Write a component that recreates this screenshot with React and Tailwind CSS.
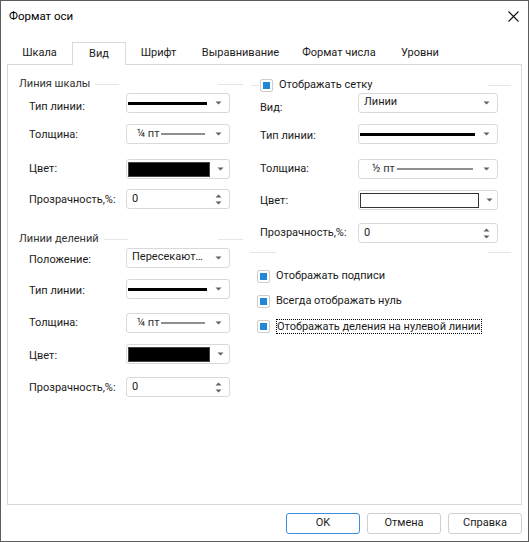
import React from "react";

const Arrow = () => (
  <div className="w-[21px] h-full flex items-center justify-center shrink-0">
    <svg width="7" height="4" viewBox="0 0 7 4">
      <path d="M0.5 0.5 L6.5 0.5 L3.5 3.5 Z" fill="#606060" />
    </svg>
  </div>
);

const Spin = () => (
  <div className="w-[21px] h-full flex flex-col items-center justify-center gap-[3px] shrink-0">
    <svg width="7" height="4" viewBox="0 0 7 4">
      <path d="M0.5 3.5 L6.5 3.5 L3.5 0.5 Z" fill="#606060" />
    </svg>
    <svg width="7" height="4" viewBox="0 0 7 4">
      <path d="M0.5 0.5 L6.5 0.5 L3.5 3.5 Z" fill="#606060" />
    </svg>
  </div>
);

const Box = ({ w, children }) => (
  <div
    className={`${w} h-[20px] border border-[#d9d9d9] rounded-[3px] bg-white flex items-center shrink-0`}
  >
    {children}
  </div>
);

const LineBox = ({ w }) => (
  <Box w={w}>
    <div className="flex-1 px-[1px]">
      <div className="h-[3px] bg-black" />
    </div>
    <Arrow />
  </Box>
);

const WidthBox = ({ w, text, pad }) => (
  <Box w={w}>
    <div className={`flex-1 flex items-center ${pad} pr-[3px]`}>
      <span className="text-[#333] leading-[16px]">{text}</span>
      <div className="flex-1 ml-[2px] h-[2px] bg-[#8f8f8f]" />
    </div>
    <Arrow />
  </Box>
);

const ColorBox = ({ w, swatch }) => (
  <Box w={w}>
    <div className="flex-1 pl-[1px]">
      <div className={swatch} />
    </div>
    <Arrow />
  </Box>
);

const TextBox = ({ w, text }) => (
  <Box w={w}>
    <div className="flex-1 pl-[5px] whitespace-nowrap overflow-hidden leading-[16px] pb-[2px]">{text}</div>
    <Arrow />
  </Box>
);

const SpinBox = ({ w }) => (
  <Box w={w}>
    <div className="flex-1 pl-[5px] leading-[16px]">0</div>
    <Spin />
  </Box>
);

const Row = ({ mt, label, lw, lcls = "", children }) => (
  <div className={`flex items-center h-[20px] ${mt}`}>
    <span className={`${lw} shrink-0 leading-[16px] ${lcls}`}>{label}</span>
    {children}
  </div>
);

const Check = () => (
  <div className="w-[13px] h-[13px] border border-[#cdcdcd] rounded-[2px] bg-white flex items-center justify-center shrink-0">
    <div className="w-[7px] h-[7px] bg-[#2188d8]" />
  </div>
);

const GroupTitle = ({ mt, text }) => (
  <div className={`flex items-center h-[16px] pl-[11px] pr-[7px] ${mt}`}>
    <span className="text-[#333]">{text}</span>
    <span className="ml-[5px] w-[24px] h-px bg-[#e6e6e6]" />
    <span className="ml-auto w-[25px] h-px bg-[#e6e6e6]" />
  </div>
);

const tabs = [
  { name: "Шкала", w: "w-[65px]" },
  { name: "Вид", w: "w-[54px]", active: true },
  { name: "Шрифт", w: "w-[65px]" },
  { name: "Выравнивание", w: "w-[99px]" },
  { name: "Формат числа", w: "w-[98px]" },
  { name: "Уровни", w: "w-[64px]" },
];

export default function App() {
  const L = "w-[97px]";
  const R = "w-[98px]";
  return (
    <div
      className="w-[529px] h-[542px] border border-[#5c5c5c] bg-white flex flex-col text-[11px] text-[#1b1b1b]"
      style={{ fontFamily: 'Roboto, "Noto Sans", sans-serif' }}
    >
      {/* title bar */}
      <div className="h-[41px] flex items-start justify-between">
        <span className="ml-[8px] mt-[7px] text-[11.5px] text-black">Формат оси</span>
        <svg className="mt-[10px] mr-[9px]" width="11" height="11" viewBox="0 0 11 11">
          <path d="M0.5 0.5 L10.5 10.5 M10.5 0.5 L0.5 10.5" stroke="#111" strokeWidth="1.1" />
        </svg>
      </div>

      {/* tabs */}
      <div className="h-[22px] flex ml-[6px] relative z-10">
        {tabs.map((t) => (
          <div
            key={t.name}
            className={`${t.w} flex items-center justify-center ${
              t.active
                ? "bg-white border border-b-0 border-[#d9d9d9] h-[23px]"
                : "h-[22px]"
            }`}
          >
            {t.name}
          </div>
        ))}
      </div>

      {/* panel */}
      <div className="mx-[6px] h-[441px] border border-[#d9d9d9] flex">
        {/* left column */}
        <div className="w-[242px] flex flex-col">
          <GroupTitle mt="mt-[11px]" text="Линия шкалы" />
          <div className="pl-[21px] flex flex-col">
            <Row mt="mt-[1px]" label="Тип линии:" lw={L} lcls="pt-[8px]">
              <LineBox w="w-[104px]" />
            </Row>
            <Row mt="mt-[11px]" label="Толщина:" lw={L} lcls="pt-[2px]">
              <WidthBox w="w-[104px]" text="¼ пт" pad="pl-[10px]" />
            </Row>
            <Row mt="mt-[15px]" label="Цвет:" lw={L}>
              <ColorBox w="w-[104px]" swatch="w-[82px] h-[15px] bg-black border border-[#444]" />
            </Row>
            <Row mt="mt-[10px]" label="Прозрачность,%:" lw={L} lcls="pt-[2px]">
              <SpinBox w="w-[104px]" />
            </Row>
          </div>

          <GroupTitle mt="mt-[22px]" text="Линии делений" />
          <div className="pl-[21px] flex flex-col">
            <Row mt="mt-[1px]" label="Положение:" lw={L} lcls="pt-[3px]">
              <TextBox w="w-[104px]" text="Пересекают…" />
            </Row>
            <Row mt="mt-[11px]" label="Тип линии:" lw={L} lcls="pt-[4px]">
              <LineBox w="w-[104px]" />
            </Row>
            <Row mt="mt-[14px]" label="Толщина:" lw={L}>
              <WidthBox w="w-[104px]" text="¼ пт" pad="pl-[10px]" />
            </Row>
            <Row mt="mt-[11px]" label="Цвет:" lw={L} lcls="pt-[4px]">
              <ColorBox w="w-[104px]" swatch="w-[82px] h-[15px] bg-black border border-[#444]" />
            </Row>
            <Row mt="mt-[13px]" label="Прозрачность,%:" lw={L} lcls="pt-[2px]">
              <SpinBox w="w-[104px]" />
            </Row>
          </div>
        </div>

        {/* right column */}
        <div className="flex-1 flex flex-col">
          <div className="mt-[12px] h-[16px] flex items-center pl-[1px] pr-[10px]">
            <span className="w-[8px] h-px bg-[#e6e6e6]" />
            <span className="ml-[1px]">
              <Check />
            </span>
            <span className="ml-[6px]">Отображать сетку</span>
            <span className="ml-auto w-[23px] h-px bg-[#e6e6e6]" />
          </div>
          <div className="pl-[10px] flex flex-col">
            <Row mt="mt-0" label="Вид:" lw={R} lcls="pt-[9px]">
              <TextBox w="w-[140px]" text="Линии" />
            </Row>
            <Row mt="mt-[11px]" label="Тип линии:" lw={R} lcls="pt-[3px]">
              <LineBox w="w-[140px]" />
            </Row>
            <Row mt="mt-[15px]" label="Толщина:" lw={R}>
              <WidthBox w="w-[140px]" text="½ пт" pad="pl-[13px]" />
            </Row>
            <Row mt="mt-[11px]" label="Цвет:" lw={R} lcls="pt-[2px]">
              <ColorBox w="w-[140px]" swatch="w-[119px] h-[15px] bg-white border border-[#333]" />
            </Row>
            <Row mt="mt-[13px]" label="Прозрачность,%:" lw={R}>
              <SpinBox w="w-[140px]" />
            </Row>
          </div>
          <div className="mt-[9px] h-px flex pr-[10px]">
            <span className="w-[26px] h-px bg-[#e6e6e6]" />
            <span className="ml-auto w-[23px] h-px bg-[#e6e6e6]" />
          </div>
          <div className="pl-[7px] flex flex-col">
            <div className="mt-[15px] h-[16px] flex items-center">
              <Check />
              <span className="ml-[6px]">Отображать подписи</span>
            </div>
            <div className="mt-[9px] h-[16px] flex items-center">
              <Check />
              <span className="ml-[6px]">Всегда отображать нуль</span>
            </div>
            <div className="mt-[9px] h-[16px] flex items-center">
              <Check />
              <span className="ml-[6px] border border-dotted border-black leading-[13px] pr-[1px]">
                Отображать деления на нулевой линии
              </span>
            </div>
          </div>
        </div>
      </div>

      {/* footer */}
      <div className="flex justify-end gap-[7px] mt-[8px] mr-[6px]">
        <button className="w-[74px] h-[21px] border border-[#3d8ee0] rounded-[3px] bg-white text-[11px] text-[#1b1b1b]">
          OK
        </button>
        <button className="w-[74px] h-[21px] border border-[#d0d0d0] rounded-[3px] bg-white text-[11px] text-[#1b1b1b]">
          Отмена
        </button>
        <button className="w-[74px] h-[21px] border border-[#d0d0d0] rounded-[3px] bg-white text-[11px] text-[#1b1b1b]">
          Справка
        </button>
      </div>
    </div>
  );
}
